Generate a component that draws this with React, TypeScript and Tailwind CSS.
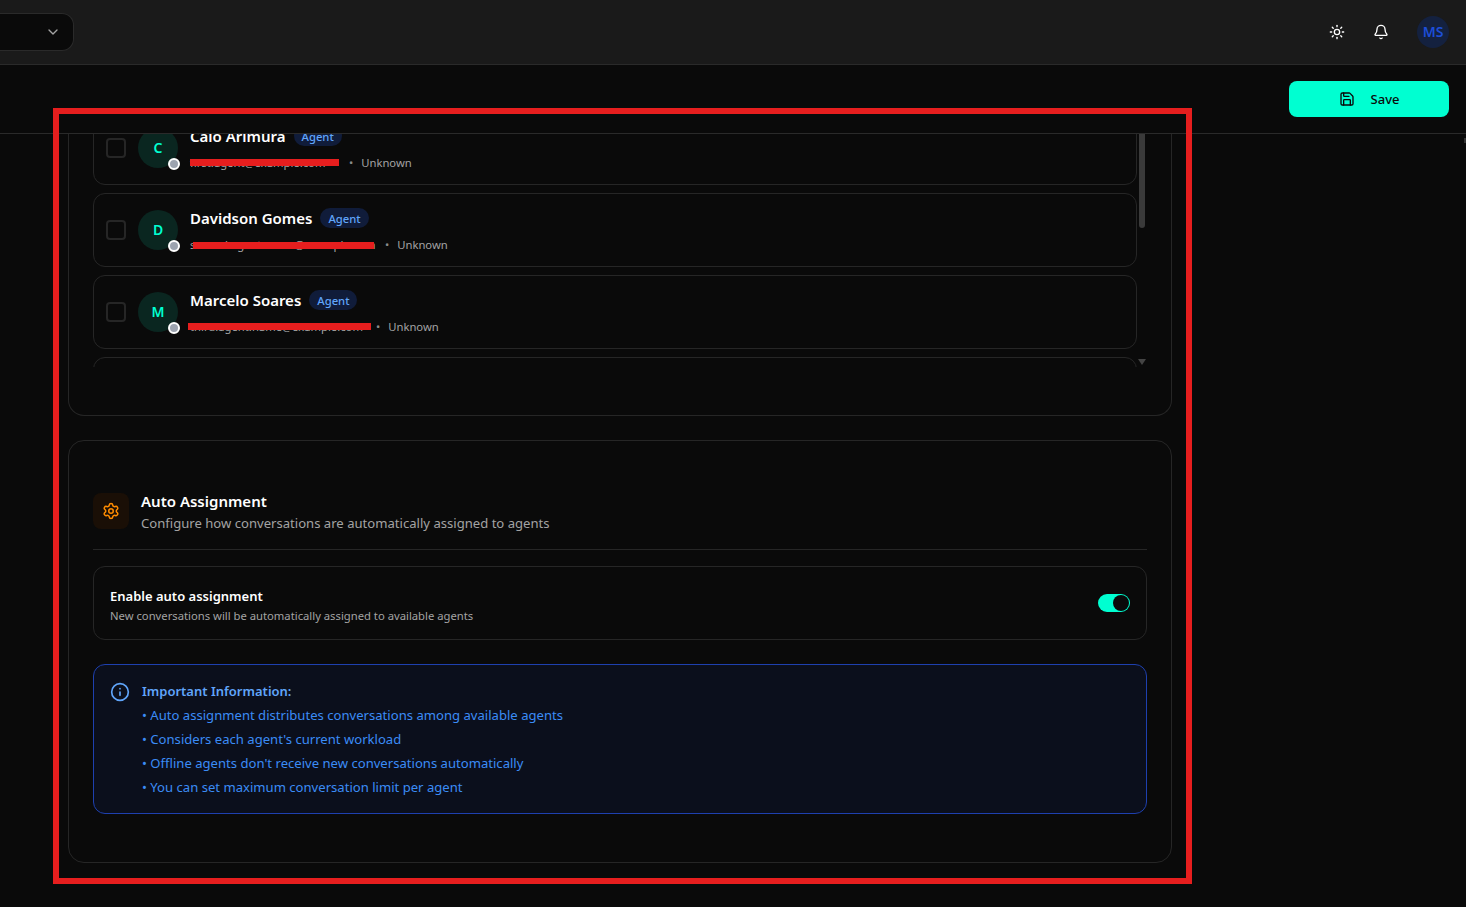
import { Bell, ChevronDown, Info, Save, Settings, Sun } from 'lucide-react';

const agents = [
  { name: 'Caio Arimura', initial: 'C', email: 'first.agent@example.com', box: 'w-[151px]', bar: 'left-0 top-[4px] w-[149px]' },
  { name: 'Davidson Gomes', initial: 'D', email: 'second.agent.name@example.com', box: 'w-[187px]', bar: 'left-[3px] top-[5px] w-[181px]' },
  { name: 'Marcelo Soares', initial: 'M', email: 'third.agent.name@example.com', box: 'w-[178px]', bar: '-left-[2px] top-[4px] w-[183px]' },
];

const notes = [
  'Auto assignment distributes conversations among available agents',
  "Considers each agent's current workload",
  "Offline agents don't receive new conversations automatically",
  'You can set maximum conversation limit per agent',
];

function AgentRow({ agent }: { agent: (typeof agents)[number] }) {
  return (
    <div className="flex h-[74px] shrink-0 items-center rounded-xl border border-[#262626] px-3">
      <div className="h-5 w-5 rounded border-2 border-[#262626]" />
      <div className="relative ml-3 flex h-10 w-10 items-center justify-center rounded-full bg-[#0a2620] text-sm font-semibold text-[#00ffd1]">
        {agent.initial}
        <span className="absolute -bottom-[2px] -right-[2px] h-3 w-3 rounded-full border-2 border-white bg-[#9ca3af]" />
      </div>
      <div className="ml-3 pt-px">
        <div className="flex items-center gap-2">
          <span className="text-[15px] leading-5 font-semibold text-white">{agent.name}</span>
          <span className="flex h-5 items-center rounded-full bg-[#101c3a] px-2 pt-[2px] text-[11.25px] font-medium text-[#60a5fa]">Agent</span>
        </div>
        <div className="mt-[9px] flex h-4 items-center text-[11.25px] text-[#a3a3a3]">
          <span className={`relative whitespace-nowrap ${agent.box}`}>
            {agent.email}
            <span className={`absolute h-[7px] bg-[#e61e1e] ${agent.bar}`} />
          </span>
          <span className="mx-2 text-[#8a8a8a]">•</span>
          <span>Unknown</span>
        </div>
      </div>
    </div>
  );
}

export default function App() {
  return (
    <div className="relative flex h-[907px] w-[1466px] flex-col overflow-hidden bg-[#0a0a0a] font-['Noto_Sans',sans-serif]">
      <header className="flex h-[65px] shrink-0 items-center border-b border-[#2a2a2a] bg-[#1a1a1a] pr-[17px]">
        <div className="flex h-[38px] w-[74px] items-center justify-end rounded-r-xl border border-l-0 border-[#2a2a2a] bg-[#0a0a0a] pr-3">
          <ChevronDown className="h-4 w-4 text-[#a3a3a3]" />
        </div>
        <Sun className="ml-auto h-4 w-4 text-white" />
        <Bell className="ml-7 h-4 w-4 text-white" />
        <div className="ml-7 flex h-8 w-8 items-center justify-center rounded-full bg-[#14213f] text-sm font-semibold text-[#1d4ed8]">MS</div>
      </header>

      <div className="flex h-[69px] shrink-0 items-center justify-end border-b border-[#2a2a2a] pr-[17px]">
        <button className="flex h-9 w-40 items-center justify-center gap-4 rounded-lg bg-[#00ffd1] text-[13px] font-medium text-[#0a0a0a]">
          <Save className="h-4 w-4" />
          <span className="pt-px">Save</span>
        </button>
      </div>

      <main className="flex flex-1 flex-col gap-[24px] overflow-hidden pl-[68px]">
        <section className="w-[1104px] shrink-0 rounded-b-2xl border border-t-0 border-[#262626] pb-[48px] pl-6 pr-6">
          <div className="flex h-[233px]">
            <div className="h-full w-[1044px] overflow-hidden">
              <div className="-mt-[23px] flex flex-col gap-2">
                {agents.map((agent) => (
                  <AgentRow key={agent.name} agent={agent} />
                ))}
                <AgentRow agent={agents[0]} />
              </div>
            </div>
            <div className="ml-[2px] flex h-full w-[6px] flex-col justify-between">
              <div className="h-[94px] rounded-b-full bg-[#3a3a3a]" />
              <div className="mb-[2px] ml-[-1px] h-0 w-0 border-x-4 border-t-[6px] border-x-transparent border-t-[#444444]" />
            </div>
          </div>
        </section>

        <section className="w-[1104px] shrink-0 rounded-2xl border border-[#262626] px-6 pb-12 pt-[50px]">
          <div className="flex items-start gap-3 border-b border-[#262626] pb-4">
            <div className="mt-[2px] flex h-9 w-9 items-center justify-center rounded-lg bg-[#1a0f06]">
              <Settings className="h-[18px] w-[18px] text-[#ff8c00]" />
            </div>
            <div>
              <h2 className="text-[15px] leading-5 font-semibold text-white">Auto Assignment</h2>
              <p className="mt-[2px] text-[13.1px] leading-5 text-[#a3a3a3]">Configure how conversations are automatically assigned to agents</p>
            </div>
          </div>

          <div className="mt-4 flex h-[74px] items-center justify-between rounded-xl border border-[#262626] px-4">
            <div className="pt-[6px]">
              <div className="text-[13px] leading-5 font-semibold text-white">Enable auto assignment</div>
              <div className="text-[11.25px] leading-5 text-[#a3a3a3]">New conversations will be automatically assigned to available agents</div>
            </div>
            <div className="flex h-[18px] w-8 items-center justify-end rounded-full bg-[#00ffd1] pr-px">
              <span className="h-4 w-4 rounded-full bg-[#0a0a0a]" />
            </div>
          </div>

          <div className="mt-6 flex gap-3 rounded-xl border border-[#1e40af] bg-[#0b0f1c] px-4 py-[14px]">
            <Info className="mt-[3px] h-5 w-5 shrink-0 text-[#60a5fa]" />
            <div className="text-[13.1px] leading-6 text-[#3b8cf6]">
              <div className="font-semibold text-[13px] text-[#60a5fa]">Important Information:</div>
              {notes.map((note) => (
                <div key={note}>• {note}</div>
              ))}
            </div>
          </div>
        </section>
      </main>

      <div className="absolute right-0 top-[138px] h-[5px] w-[2px] bg-[#333333]" />
      <div className="pointer-events-none absolute left-[53px] top-[108px] h-[776px] w-[1139px] border-[6px] border-[#e61e1e]" />
    </div>
  );
}
